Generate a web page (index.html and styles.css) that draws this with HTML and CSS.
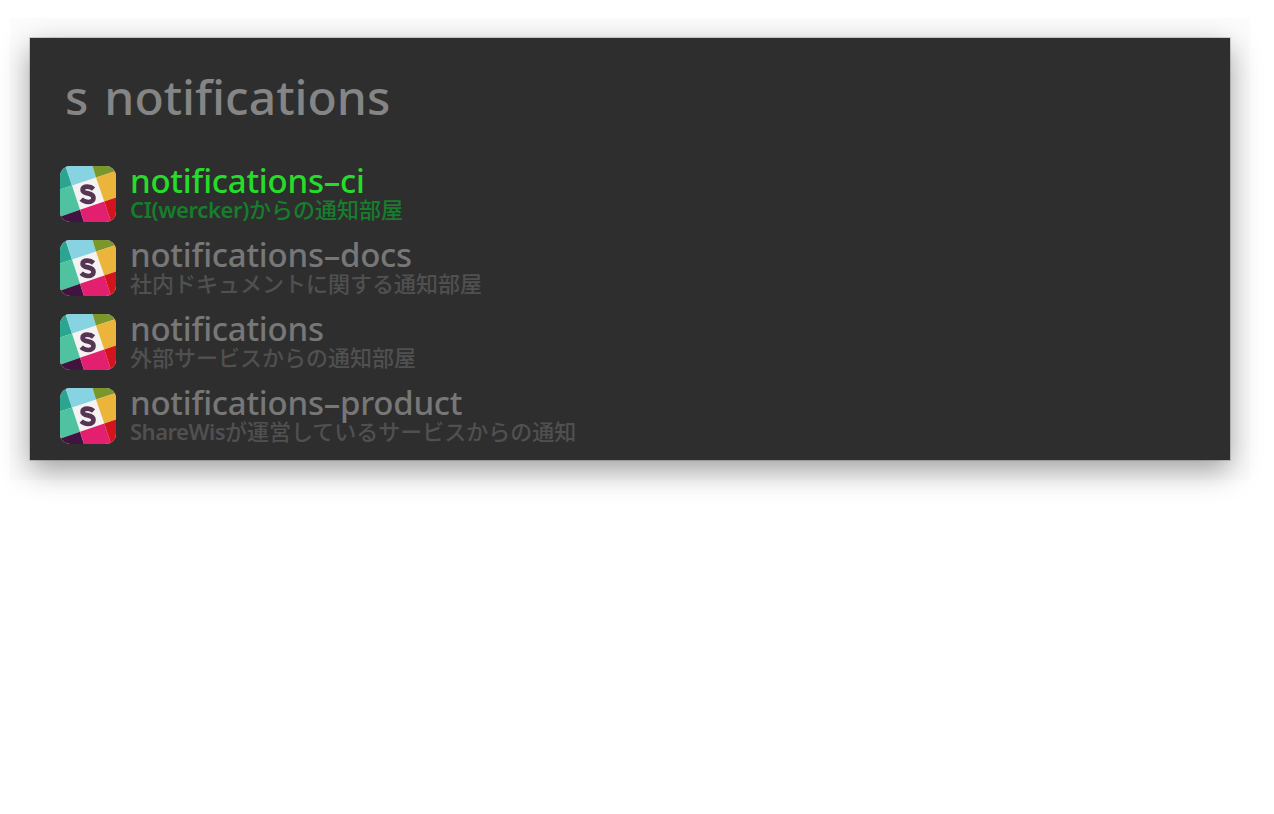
FILE: index.html
```html
<!DOCTYPE html>
<html lang="ja">
<head>
<meta charset="utf-8">
<title>Launcher</title>
<link rel="stylesheet" href="styles.css">
</head>
<body>
<svg class="defs" width="0" height="0" aria-hidden="true">
  <defs>
    <clipPath id="tile"><rect width="56" height="56" rx="10"/></clipPath>
    <symbol id="slack" viewBox="0 0 56 56">
      <g clip-path="url(#tile)">
        <rect width="56" height="56" fill="#f5f2f2"/>
        <path fill="#2ba58f" d="M0 0H5.5L12 19.5L0 23.5Z"/>
        <path fill="#87d3e1" d="M5.5 0H32.5L36 11.5L12 19.5Z"/>
        <path fill="#7b962b" d="M32.5 0H56V5L36 11.5Z"/>
        <path fill="#ebb43a" d="M36 11.5L56 5V31.5L44.3 35.5Z"/>
        <path fill="#4fc2a0" d="M0 23.5L12 19.5L20 43.7L0 50.7Z"/>
        <path fill="#401340" d="M0 50.7L20 43.7L24 56H0Z"/>
        <path fill="#e3206f" d="M20 43.7L44.3 35.5L51 56H24Z"/>
        <path fill="#d3131d" d="M44.3 35.5L56 31.5V56H51Z"/>
        <path fill="none" stroke="#553454" stroke-width="4.7" d="M33.6 23C31.8 21.4 29.8 20.7 27.6 20.7C24.6 20.7 22.6 21.9 22.6 23.9C22.6 26.1 24.6 26.7 28 27.4C31.6 28.2 33.5 29.4 33.5 32C33.5 34.5 31.3 36 28.2 36C25.4 36 23.1 35.1 21.2 33.2"/>
      </g>
    </symbol>
  </defs>
</svg>
<main class="panel">
  <div class="query"><span class="query-text">s notifications</span></div>
  <ul class="results">
    <li class="result selected">
      <svg class="icon"><use href="#slack"/></svg>
      <div class="body"><span class="title">notifications–ci</span><span class="sub"><span class="latin">CI(wercker)</span>からの通知部屋</span></div>
    </li>
    <li class="result">
      <svg class="icon"><use href="#slack"/></svg>
      <div class="body"><span class="title">notifications–docs</span><span class="sub">社内ドキュメントに関する通知部屋</span></div>
    </li>
    <li class="result">
      <svg class="icon"><use href="#slack"/></svg>
      <div class="body"><span class="title">notifications</span><span class="sub">外部サービスからの通知部屋</span></div>
    </li>
    <li class="result">
      <svg class="icon"><use href="#slack"/></svg>
      <div class="body"><span class="title">notifications–product</span><span class="sub"><span class="latin">ShareWis</span>が運営しているサービスからの通知</span></div>
    </li>
  </ul>
</main>
</body>
</html>
```
FILE: styles.css
```css
* { box-sizing: border-box; }
html { background: #fff; }
body {
  margin: 0;
  min-height: 814px;
  padding: 38px 44px 0 30px;
  font-family: "Noto Sans", "Noto Sans CJK JP", sans-serif;
  font-feature-settings: "liga" 1;
}
.defs { display: block; }
.panel {
  height: 422px;
  padding: 21px 30px 0;
  background: #2e2e2e;
  box-shadow: 0 0 0 1px rgba(0, 0, 0, .15), 0 10px 28px rgba(0, 0, 0, .38), 0 0 0 20px rgba(0, 0, 0, .012);
}
.query {
  display: flex;
  height: 107px;
  padding-left: 5px;
  color: #858585;
  font-size: 48px;
  font-weight: 500;
  line-height: 76px;
  word-spacing: 3.5px;
  white-space: pre;
}
.results {
  display: grid;
  grid-auto-rows: 56px;
  gap: 18px;
  margin: 0;
  padding: 0;
  list-style: none;
}
.result { display: flex; gap: 14px; color: #777; }
.icon { width: 56px; height: 56px; flex: none; }
.body { display: flex; flex-direction: column; white-space: nowrap; }
.title {
  height: 30px;
  font-size: 33px;
  font-weight: 500;
  line-height: 30px;
  letter-spacing: -.24px;
}
.sub {
  height: 26px;
  color: #505050;
  font-family: "Noto Sans CJK JP", sans-serif;
  font-size: 22px;
  font-weight: 500;
  line-height: 24px;
}
.latin {
  font-family: "Noto Sans", sans-serif;
  font-weight: 600;
  letter-spacing: -.5px;
}
.selected .latin { letter-spacing: -.37px; }
.selected .title { color: #25dc2a; }
.selected .sub { color: #167d2d; }
```
